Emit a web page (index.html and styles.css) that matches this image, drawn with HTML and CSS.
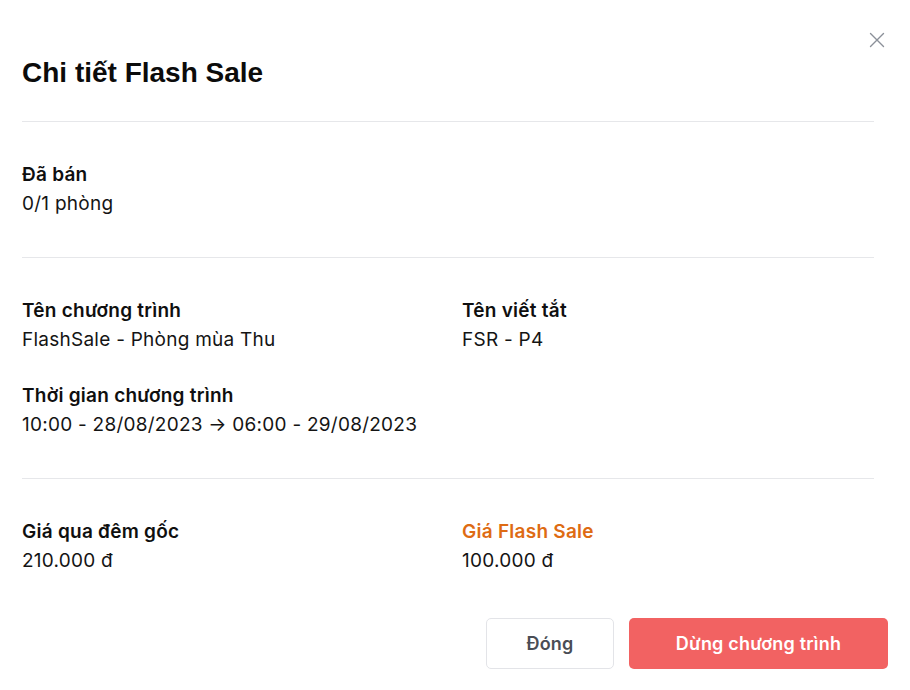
FILE: index.html
```html
<!DOCTYPE html>
<html lang="vi">
<head>
<meta charset="utf-8">
<title>Chi tiết Flash Sale</title>
<link rel="stylesheet" href="styles.css">
</head>
<body>
<div class="modal">
  <button class="close" aria-label="Đóng">
    <svg width="16" height="16" viewBox="0 0 16 16"><path d="M1.5 1.5 L14.5 14.5 M14.5 1.5 L1.5 14.5" stroke="#8b9099" stroke-width="1.4" fill="none" stroke-linecap="round"/></svg>
  </button>
  <header class="head">
    <h1 class="title">Chi tiết Flash Sale</h1>
  </header>
  <section class="section">
    <div class="field">
      <div class="label">Đã bán</div>
      <div class="value">0/1 phòng</div>
    </div>
  </section>
  <section class="section grid">
    <div class="field">
      <div class="label">Tên chương trình</div>
      <div class="value">FlashSale - Phòng mùa Thu</div>
    </div>
    <div class="field">
      <div class="label">Tên viết tắt</div>
      <div class="value">FSR - P4</div>
    </div>
    <div class="field">
      <div class="label">Thời gian chương trình</div>
      <div class="value">10:00 - 28/08/2023 → 06:00 - 29/08/2023</div>
    </div>
  </section>
  <section class="section grid last">
    <div class="field">
      <div class="label">Giá qua đêm gốc</div>
      <div class="value">210.000 đ</div>
    </div>
    <div class="field">
      <div class="label orange">Giá Flash Sale</div>
      <div class="value">100.000 đ</div>
    </div>
  </section>
  <footer class="foot">
    <button class="btn btn-ghost">Đóng</button>
    <button class="btn btn-danger">Dừng chương trình</button>
  </footer>
</div>
</body>
</html>
```

FILE: styles.css
```css
* { box-sizing: border-box; }
html, body { margin: 0; padding: 0; background: #fff; }
body { font-family: Inter, "Noto Sans", sans-serif; color: #111; }

.modal {
  position: relative;
  width: 910px;
  height: 690px;
  padding: 0 36px 0 22px;
}

.close {
  position: absolute;
  top: 32px;
  right: 25px;
  width: 16px;
  height: 16px;
  padding: 0;
  border: 0;
  background: none;
  display: flex;
}

.head {
  padding: 56px 0 31px;
  border-bottom: 1px solid #e6e7ea;
}
.title {
  margin: 0;
  font-family: "Liberation Sans", Arial, sans-serif;
  font-weight: 700;
  font-size: 28px;
  line-height: 34px;
  color: #0b0b0b;
}

.section {
  padding: 38px 0 39px;
  border-bottom: 1px solid #e6e7ea;
}
.section.last { border-bottom: 0; padding-bottom: 0; }

.grid {
  display: grid;
  grid-template-columns: 412px 412px;
  column-gap: 28px;
  row-gap: 27px;
}

.label {
  font-size: 19px;
  font-weight: 600;
  line-height: 29px;
  letter-spacing: 0.25px;
  color: #0f0f0f;
}
.label.orange { color: #de6b13; }
.value {
  font-size: 19px;
  font-weight: 400;
  line-height: 29px;
  letter-spacing: 0.25px;
  color: #141414;
}

.foot {
  display: flex;
  justify-content: flex-end;
  gap: 15px;
  margin: 43px -14px 0 0;
}
.btn {
  height: 51px;
  border-radius: 5px;
  font-family: Inter, "Noto Sans", sans-serif;
  font-size: 18px;
  font-weight: 600;
  letter-spacing: 0.2px;
  cursor: pointer;
}
.btn-ghost {
  width: 128px;
  background: #fff;
  border: 1px solid #e3e4e8;
  color: #4a4d55;
}
.btn-danger {
  width: 259px;
  background: #f26262;
  border: 0;
  color: #fff;
}
```
